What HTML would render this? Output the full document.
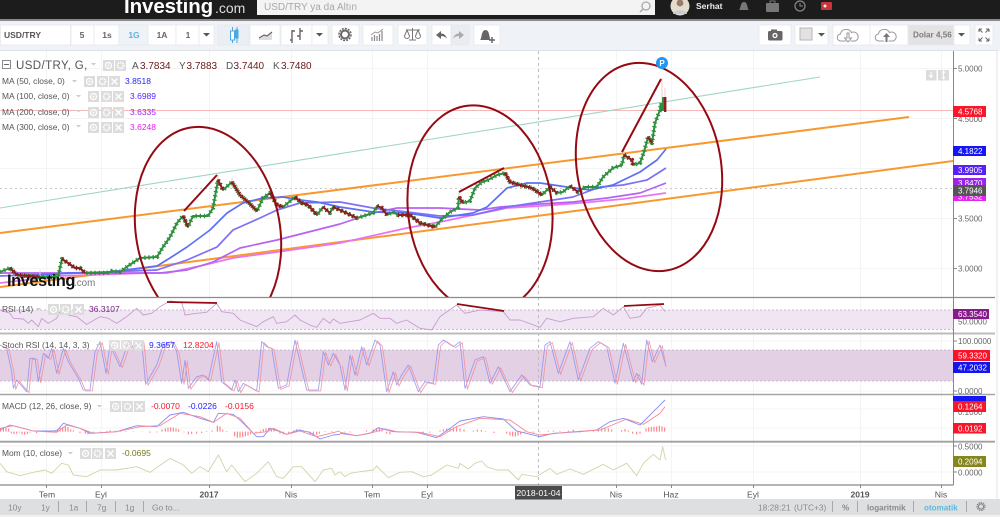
<!DOCTYPE html>
<html lang="tr"><head><meta charset="utf-8"><title>USD/TRY</title>
<style>
html,body{margin:0;padding:0;background:#fff;width:1000px;height:517px;overflow:hidden}
svg{display:block;font-family:"Liberation Sans",sans-serif;filter:blur(.35px)}
polyline{vector-effect:non-scaling-stroke;fill:none;stroke-linejoin:round}
.bar{vector-effect:non-scaling-stroke}
.lg{font-size:8.4px;fill:#555}
.val{font-size:8.5px}
.ax{font-size:8px;fill:#666}
.tag{font-size:8px;fill:#fff}
.tm{font-size:8.6px;fill:#555;text-anchor:middle}
.bt{font-size:8.4px;fill:#8a8a8a}
.bb{font-size:8.1px;fill:#8a8a8a;font-weight:bold}
.tb{font-size:8.5px;font-weight:bold;fill:#666;text-anchor:middle}
</style></head><body>
<svg width="1000" height="517" viewBox="0 0 1000 517" xmlns="http://www.w3.org/2000/svg">
<defs>
<clipPath id="main"><rect x="0" y="51" width="953" height="246"/></clipPath>
<g id="eye"><rect width="11" height="11" fill="#dcdcdc"/><circle cx="5.5" cy="5.5" r="3" fill="none" stroke="#fff" stroke-width="1.2"/><circle cx="5.5" cy="5.5" r="1" fill="#fff"/></g>
<g id="gr"><rect width="11" height="11" fill="#dcdcdc"/><circle cx="5.5" cy="5.5" r="3" fill="none" stroke="#fff" stroke-width="1.8" stroke-dasharray="1.4 .8"/></g>
<g id="xx"><rect width="11" height="11" fill="#dcdcdc"/><path d="M2.5 2.5l6 6M8.5 2.5l-6 6" stroke="#fff" stroke-width="1.4"/></g>
<path id="car" d="M0 0h5l-2.500 2.500z" fill="#ccc"/>
<path id="cd" d="M0 0h7l-3.500 3.500z" fill="#555"/>
<polyline id="price" points="0,272 10,268 17,275 40,277 58,277 62,259 68,263 75,268 80,268 85,273 107,273 112,271 120,272 128,266 140,258 157,257 163,247 170,237 177,223 183,216 188,227 193,216 208,216 213,208 218,180 223,190 232,182 240,195 248,202 257,211 263,198 270,193 277,205 283,207 295,197 302,203 308,205 317,215 323,207 330,213 333,207 340,210 357,218 373,213 377,206 382,208 387,215 393,212 398,215 410,215 420,223 435,227 442,219 450,212 458,208 459,197 463,203 470,201 475,188 482,182 488,180 497,175 505,173 510,182 520,185 532,188 542,195 550,187 557,193 563,192 570,186 578,192 585,187 597,187 603,177 613,168 622,165 624,155 632,160 633,165 640,163 644,152 648,137 652,143 655,123 660,110 661,103"/>
<path id="down" fill="none" d="M10 268L17 275 40 277M62 259L68 263 75 268 80 268 85 273M183 216L188 227M218 180L223 190M232 182L240 195 248 202 257 211M270 193L277 205 283 207M295 197L302 203 308 205 317 215M323 207L330 213M333 207L340 210 357 218M377 206L382 208 387 215M398 215L410 215 420 223 435 227M459 197L463 203M505 173L510 182 520 185 532 188 542 195M550 187L557 193M570 186L578 192M624 155L632 160 633 165M648 137L652 143"/>
</defs>

<!-- page backgrounds -->
<rect width="1000" height="517" fill="#fff"/>
<rect y="20" width="1000" height="31" fill="#eff2f6"/>
<rect width="1000" height="20" fill="#1c1c1c"/>
<rect y="19" width="1000" height="2" fill="#8a8a8a"/>

<!-- header -->
<text x="124" y="13" font-size="20.5" font-weight="bold" fill="#fff" letter-spacing="-.1">Investing</text>
<text x="215" y="13" font-size="14" fill="#ddd">.com</text>
<rect x="257" y="0" width="398" height="15" fill="#f3f3f3"/>
<text x="264" y="10" font-size="10" fill="#a8a8a8">USD/TRY ya da Altın</text>
<circle cx="646" cy="6" r="4" fill="none" stroke="#aaa" stroke-width="1.3"/><path d="M643 9l-3 3" stroke="#aaa" stroke-width="1.5"/>
<circle cx="680" cy="6" r="9.5" fill="#e4dccd"/><circle cx="680" cy="3" r="3.4" fill="#9a7b66"/><path d="M673 14c1-5 13-5 14 0z" fill="#c4cdd6"/>
<text x="696" y="9" font-size="8.5" font-weight="bold" fill="#eee">Serhat</text>
<path d="M739 10c2-1 1-8 5-8s3 7 5 8z" fill="#777"/>
<rect x="766" y="3" width="13" height="9" rx="1" fill="#777"/><rect x="770" y="1" width="5" height="3" fill="none" stroke="#777"/>
<circle cx="800" cy="6" r="5" fill="none" stroke="#888" stroke-width="1.2"/><path d="M800 3v3h3" stroke="#888" fill="none"/>
<rect x="821" y="2" width="11" height="8" rx="1" fill="#c8333d"/><circle cx="825" cy="6" r="1.5" fill="#eee"/>

<!-- toolbar buttons -->
<g fill="#fff" stroke="#e6e9ee" stroke-width=".8">
<rect x=".5" y="25" width="70" height="20"/><rect x="71" y="25" width="23" height="20"/><rect x="94" y="25" width="25" height="20"/>
<rect x="119" y="25" width="29" height="20" fill="#eef3f8"/><rect x="148" y="25" width="28" height="20"/><rect x="176" y="25" width="23" height="20"/><rect x="199" y="25" width="15" height="20"/>
<rect x="218" y="25" width="31" height="20" fill="#eaeff5"/><rect x="250" y="25" width="30" height="20"/><rect x="281" y="25" width="31" height="20"/><rect x="312" y="25" width="16" height="20"/>
<rect x="332" y="25" width="27" height="20"/><rect x="363" y="25" width="30" height="20"/><rect x="398" y="25" width="29" height="20"/>
<rect x="432" y="25" width="19" height="20"/><rect x="451" y="25" width="18" height="20" fill="#e9ecf0"/><rect x="474" y="25" width="26" height="20"/>
<rect x="759" y="25" width="32" height="20"/><rect x="795" y="25" width="33" height="20"/><rect x="833" y="25" width="37" height="20"/><rect x="870" y="25" width="38" height="20"/>
<rect x="908" y="25" width="46" height="20" fill="#e3e3e3"/><rect x="954" y="25" width="16" height="20"/><rect x="975" y="25" width="18" height="20"/>
</g>
<text x="4" y="38" font-size="8.5" font-weight="bold" fill="#555">USD/TRY</text>
<text x="82" y="38" class="tb">5</text><text x="107" y="38" class="tb">1s</text>
<text x="134" y="38" class="tb" style="fill:#5cb3e2">1G</text>
<text x="162" y="38" class="tb">1A</text><text x="188" y="38" class="tb">1</text>
<use href="#cd" x="203" y="33"/><use href="#cd" x="316" y="33"/><use href="#cd" x="818" y="33"/><use href="#cd" x="958" y="33"/>
<path d="M232.500 27v16M237 27v16" stroke="#4aa8e0"/>
<rect x="230.500" y="31" width="4" height="9" fill="#fff" stroke="#4aa8e0"/><rect x="235" y="29.500" width="3.500" height="9" fill="#4aa8e0"/>
<path d="M259 38l5-3 3 1 5-4v8h-13z" fill="#ddd"/><path d="M259 38l5-3 3 1 5-4" fill="none" stroke="#666" stroke-width="1.200"/>
<path d="M292 30v13M292 40h-2M292 31h3M300 28v12M300 36h-3M300 31h3" fill="none" stroke="#666" stroke-width="1.400"/>
<circle cx="345" cy="34.500" r="4" fill="none" stroke="#666" stroke-width="2"/><circle cx="345" cy="34.500" r="6" fill="none" stroke="#666" stroke-width="1.500" stroke-dasharray="2 1.100"/>
<path d="M372 41v-4M374.500 41v-6M377 41v-5M379.500 41v-7M382 41v-10" stroke="#888" stroke-width="1.200"/><path d="M371 35l4-3 3 1 5-4" fill="none" stroke="#999"/>
<path d="M412.500 28v12M409 40h7M406 30h14" stroke="#777" fill="none"/><path d="M404.500 36l2.500-6 2.500 6a2.500 2.500 0 0 1-5 0zM415.500 36l2.500-6 2.500 6a2.500 2.500 0 0 1-5 0z" fill="none" stroke="#777"/>
<path d="M436 35l5-4v2.500c3 0 5 2 6 5-2-2-4-2.500-6-2.500v3z" fill="#666"/>
<path d="M464 35l-5-4v2.500c-3 0-5 2-6 5 2-2 4-2.500 6-2.500v3z" fill="#aaa"/>
<path d="M480 40c2-1 1-10 5.500-10s3.500 9 5.500 10z" fill="#666"/><path d="M489 40h6M492 37v6" stroke="#666" stroke-width="1.500"/>
<rect x="768" y="31" width="14.500" height="9.500" rx="1.500" fill="#666"/><rect x="771" y="29.500" width="6" height="2" fill="#666"/><circle cx="775" cy="35.500" r="2.600" fill="#fff"/><circle cx="775" cy="35.500" r="1.300" fill="#666"/>
<rect x="800" y="28" width="12" height="12" fill="#e2e2e2" stroke="#b5b5b5"/>
<path d="M846 41h-5a3.500 3.500 0 0 1-.5-7 5 5 0 0 1 5-4.500 5.500 5.500 0 0 1 6 3 4.400 4.400 0 0 1 4 8.500h-5" fill="none" stroke="#999"/><path d="M849 33v5h2.500l-3.500 4-3.500-4h2.500v-5z" fill="#fff" stroke="#999"/>
<path d="M884 41h-5a3.500 3.500 0 0 1-.5-7 5 5 0 0 1 5-4.500 5.500 5.500 0 0 1 6 3 4.400 4.400 0 0 1 4 8.500h-5" fill="none" stroke="#999"/><path d="M887.500 42v-5h2.500l-3.500-4-3.500 4h2.500v5z" fill="#777"/>
<text x="913" y="37.500" font-size="8.100" font-weight="bold" fill="#7d7d7d">Dolar 4,56</text>
<path d="M979 29h3M979 29v3M979 29l3.500 3.500M989 29h-3M989 29v3M989 29l-3.500 3.500M979 41h3M979 41v-3M979 41l3.500-3.500M989 41h-3M989 41v-3M989 41l-3.500-3.500" stroke="#666" fill="none"/>

<!-- chart frame -->
<rect x="0" y="50.500" width="997" height="449" fill="#fff"/>
<path d="M0 50.500H997" stroke="#dfe2e6"/>
<path d="M997 50v449" stroke="#e3e3e3"/>

<!-- grids -->
<path d="M0 68.500H953M0 118.500H953M0 168.500H953M0 218.500H953M0 268.500H953M0 341H953M0 391H953M0 409H953M0 428H953M0 446H953M0 472H953M46.500 51V485M101.500 51V485M209.500 51V485M291.500 51V485M372.500 51V485M427.500 51V485M616.500 51V485M671.500 51V485M753.500 51V485M860.500 51V485M941.500 51V485" stroke="#f4f4f4" stroke-width="1" fill="none"/>

<!-- indicator bands -->
<rect x="0" y="310" width="953" height="19.500" fill="#f0e5f3"/>
<path d="M0 310H953M0 329.500H953" stroke="#bda9bf" stroke-dasharray="2 2" stroke-width=".8"/>
<rect x="0" y="350" width="953" height="31" fill="#e3d0e5"/>
<path d="M0 350H953M0 381H953" stroke="#bda9bf" stroke-dasharray="2 2" stroke-width=".8"/>

<!-- hlines -->
<path d="M0 110.500H953" stroke="#f9b8b8"/>
<path d="M0 188.500H953" stroke="#c8c8c8" stroke-dasharray="2 3"/>
<path d="M538.500 51V485" stroke="#bbb" stroke-dasharray="3 3"/>

<!-- main pane -->
<g clip-path="url(#main)" fill="none">
<path d="M0 208L820 77" stroke="#9ed5c8" stroke-width="1.100"/>
<path d="M0 233L909 117" stroke="#f8982e" stroke-width="2"/>
<path d="M0 287L953 161" stroke="#f8982e" stroke-width="2"/>
<polyline stroke="#e874f4" stroke-width="1.700" points="0,283 60,276 147,273 167,273 200,266 233,258 277,252 340,243 407,228 440,222 473,215 507,208 540,206 580,203 623,199 666,193"/>
<polyline stroke="#b662f2" stroke-width="1.700" points="0,273 160,273 187,270 213,262 240,248 277,240 340,224 373,213 397,208 440,208 480,210 500,207 540,204 573,202 607,198 640,193 666,183"/>
<polyline stroke="#7f70f5" stroke-width="1.700" points="0,276 80,273 157,270 187,260 217,247 233,230 260,218 277,210 300,203 340,202 373,208 407,212 440,216 473,215 507,207 540,202 573,197 600,187 623,185 647,180 666,168"/>
<polyline stroke="#5b70f7" stroke-width="1.700" points="20,277 67,273 110,272 157,266 170,258 187,247 210,230 227,213 243,203 263,198 283,197 300,200 317,202 340,207 373,212 407,213 440,218 473,213 487,207 507,188 527,183 540,183 567,187 590,190 613,185 640,172 657,160 666,149"/>
<path d="M662 78v32M665 88v12M218 175v8M270 188v6M459 192v8M624 150v6M232 178v5M120 268v4M40 270v6M505 170v5" stroke="#f1cdcd"/>
<use href="#price" stroke="#2f8f3e" stroke-width="2"/>
<use href="#price" stroke="#2f8f3e" stroke-width="4.400" stroke-dasharray="1.300 2.900"/>
<use href="#down" stroke="#8b1f1f" stroke-width="2"/>
<use href="#down" stroke="#8b1f1f" stroke-width="4.400" stroke-dasharray="1.300 2.900"/>
<rect x="659.500" y="103" width="2.500" height="8" fill="#2f8f3e"/><rect x="662" y="97" width="2" height="14" fill="#2f8f3e"/><rect x="664" y="97" width="2.400" height="15" fill="#8b1f1f"/>
<g stroke="#950a12" stroke-width="2">
<ellipse cx="208" cy="231" rx="72" ry="105" transform="rotate(-10 208 231)"/>
<ellipse cx="480" cy="209" rx="72" ry="104" transform="rotate(-7 480 209)"/>
<ellipse cx="649" cy="167" rx="72" ry="105" transform="rotate(-10 649 167)"/>
<path d="M184 211L217 175M459 192L504 168M622 152L661 79"/>
</g>
</g>
<circle cx="662" cy="63" r="6" fill="#2196f3"/><text x="662" y="66" font-size="8" font-weight="bold" fill="#fff" text-anchor="middle">P</text>
<rect x="926" y="70" width="10.500" height="10.500" fill="#dcdcdc"/><path d="M931 72v5M929 75l2 2.500 2-2.500" stroke="#fff" fill="none"/>
<rect x="938" y="70" width="11" height="10.500" fill="#dcdcdc"/><path d="M943.500 71.500v7.500M942 73l1.500-2 1.500 2M942 77l1.500 2 1.500-2" stroke="#fff" fill="none"/>

<!-- watermark -->
<text x="7" y="286" font-size="16.500" font-weight="bold" fill="#111" letter-spacing="-.5">Investing</text>
<text x="74" y="286" font-size="9.800" fill="#777">.com</text>

<!-- RSI -->
<g transform="translate(0,295) scale(.33333)">
<polyline stroke="#c99dcc" stroke-width=".9" points="0,45 30,55 40,70 70,72 85,85 95,75 115,95 125,70 145,85 170,70 180,50 205,60 230,65 260,88 300,65 325,70 350,85 380,65 410,40 430,60 455,55 480,35 510,18 545,22 555,60 590,55 620,52 650,25 665,50 700,55 720,75 770,95 790,80 820,65 830,85 860,80 885,60 900,75 930,90 950,97 970,70 990,85 1000,72 1020,85"/>
</g>
<g transform="translate(340,295) scale(.33333)">
<polyline stroke="#c99dcc" stroke-width=".9" points="0,85 30,80 60,75 100,55 120,70 150,70 170,85 200,75 240,100 275,105 300,65 350,30 375,55 420,45 490,50 510,75 540,75 600,97 620,70 660,80 700,70 760,65 790,40 820,60 850,35 870,70 900,65 920,40 960,30 975,50"/>
</g>
<path d="M167 302L217 303M457 304L504 311M624 306L664 304" stroke="#950a12" stroke-width="1.700" fill="none"/>

<!-- Stoch -->
<g transform="translate(0,295) scale(.33333)" stroke-width=".85" opacity=".85">
<polyline stroke="#8a8cf5" points="0,150 20,160 35,230 40,280 50,255 80,290 90,190 105,190 115,260 130,175 145,190 155,160 170,235 190,160 205,200 235,250 250,285 270,285 285,170 300,140 318,235 330,150 360,215 385,140 395,160 410,150 425,140 437,268 470,210 490,150 515,140 530,170 545,265 555,195 565,280 590,245 610,240 625,255 650,140 665,260 695,285 705,255 715,290 730,265 770,288 785,140 800,155 815,160 835,280 860,270 885,135 900,200 920,285 955,285 970,170 985,210 1000,175 1020,210"/>
<polyline stroke="#f48a96" transform="translate(7,3)" points="0,150 20,160 35,230 40,280 50,255 80,290 90,190 105,190 115,260 130,175 145,190 155,160 170,235 190,160 205,200 235,250 250,285 270,285 285,170 300,140 318,235 330,150 360,215 385,140 395,160 410,150 425,140 437,268 470,210 490,150 515,140 530,170 545,265 555,195 565,280 590,245 610,240 625,255 650,140 665,260 695,285 705,255 715,290 730,265 770,288 785,140 800,155 815,160 835,280 860,270 885,135 900,200 920,285 955,285 970,170 985,210 1000,175 1013,205"/>
</g>
<g transform="translate(340,295) scale(.33333)" stroke-width=".85" opacity=".85">
<polyline stroke="#8a8cf5" points="0,210 15,285 30,180 45,240 65,155 80,210 105,135 120,150 140,290 160,230 170,270 185,240 205,210 235,290 255,260 280,265 295,150 310,135 340,155 360,140 375,280 405,195 430,185 450,265 475,215 510,290 545,240 570,270 600,275 615,150 630,140 655,235 690,140 715,255 750,160 775,140 800,155 825,265 850,145 880,260 890,235 905,268 920,135 937,200 960,150 978,215"/>
<polyline stroke="#f48a96" transform="translate(7,3)" points="0,210 15,285 30,180 45,240 65,155 80,210 105,135 120,150 140,290 160,230 170,270 185,240 205,210 235,290 255,260 280,265 295,150 310,135 340,155 360,140 375,280 405,195 430,185 450,265 475,215 510,290 545,240 570,270 600,275 615,150 630,140 655,235 690,140 715,255 750,160 775,140 800,155 825,265 850,145 880,260 890,235 905,268 920,135 937,200 960,150 971,212"/>
</g>

<!-- MACD -->
<g transform="translate(0,395) scale(.33333)">
<path class="bar" stroke="#fb7d85" stroke-width="1.100" fill="none" d="M2 110V100M10 110V98M18 110V99M26 110V101M34 110V115M42 110V117M50 110V116M58 110V113M66 110V118M74 110V119M82 110V117M90 110V113M110 110V114M130 110V108M150 110V112M165 110V105M172 110V102M180 110V98M188 110V96M196 110V94M204 110V96M212 110V103M220 110V106M240 110V114M256 110V116M264 110V118M280 110V114M300 110V112M320 110V108M330 110V106M345 110V107M362 110V106M378 110V108M400 110V111M425 110V109M450 110V113M470 110V112M486 110V103M496 110V100M504 110V98M512 110V97M520 110V98M528 110V100M536 110V103M552 110V112M565 110V118M575 110V117M590 110V116M605 110V114M620 110V108M636 110V106M652 110V92M660 110V94M668 110V104M680 110V108M704 110V124M712 110V128M720 110V128M728 110V126M736 110V124M744 110V122M752 110V118M768 110V114M782 110V106M790 110V102M798 110V100M806 110V99M814 110V100M822 110V103M840 110V116M850 110V118M866 110V114M882 110V106M890 110V103M900 110V103M910 110V106M930 110V118M940 110V122M950 110V120M958 110V116M975 110V108M995 110V108M1015 110V108"/>
<polyline stroke="#8a8cf5" stroke-width=".9" points="0,105 30,90 70,100 100,108 170,108 190,85 240,100 270,115 350,110 410,92 470,95 510,60 550,52 600,70 640,82 655,55 700,58 725,80 770,125 790,125 810,100 840,110 860,118 895,105 930,112 960,132 1000,120 1020,118"/>
<polyline stroke="#f48a96" stroke-width=".9" points="0,100 40,92 100,108 170,112 200,90 240,100 280,115 350,110 420,95 480,92 540,55 600,65 640,82 680,55 720,70 760,115 800,110 820,100 860,118 900,108 950,125 1020,108"/>
</g>
<g transform="translate(340,395) scale(.33333)">
<path class="bar" stroke="#fb7d85" stroke-width="1.100" fill="none" d="M2 110V110M15 110V112M30 110V112M80 110V106M100 110V103M110 110V100M118 110V98M126 110V103M140 110V116M150 110V118M175 110V112M215 110V113M250 110V114M270 110V113M300 110V106M310 110V103M320 110V101M330 110V99M340 110V98M350 110V97M360 110V100M372 110V103M400 110V107M412 110V104M424 110V105M436 110V108M462 110V114M500 110V116M510 110V122M518 110V124M526 110V125M534 110V122M542 110V118M552 110V113M580 110V113M600 110V112M625 110V107M640 110V107M660 110V108M685 110V107M700 110V104M720 110V112M740 110V108M760 110V107M775 110V104M785 110V100M795 110V99M805 110V100M815 110V104M845 110V105M855 110V102M865 110V106M878 110V116M890 110V118M900 110V116M910 110V110M918 110V100M926 110V97M934 110V96M942 110V95M950 110V94M958 110V92M966 110V94M974 110V97"/>
<polyline stroke="#8a8cf5" stroke-width=".9" points="0,115 50,122 90,115 115,98 160,110 230,112 290,128 330,100 360,78 430,65 490,72 530,108 600,125 640,115 720,110 770,105 810,80 850,70 900,90 950,40 975,15"/>
<polyline stroke="#f48a96" stroke-width=".9" points="0,112 50,122 100,112 135,102 170,110 240,112 300,125 350,95 420,70 510,75 560,110 600,120 700,110 780,105 860,72 910,88 960,55 975,35"/>
</g>

<!-- Mom -->
<g transform="translate(0,395) scale(.33333)">
<polyline stroke="#d3d3a8" stroke-width=".9" points="0,205 20,230 60,242 100,232 135,225 155,235 185,205 205,210 220,240 260,245 300,225 350,225 410,215 450,232 510,190 550,210 575,235 600,215 625,230 655,180 680,230 695,210 735,260 770,235 805,200 830,245 850,250 880,215 905,215 945,260 970,225 995,220 1005,240 1020,230"/>
</g>
<g transform="translate(340,395) scale(.33333)">
<polyline stroke="#d3d3a8" stroke-width=".9" points="0,230 15,245 30,235 60,230 100,225 110,213 145,248 180,232 215,230 250,245 275,240 320,210 355,220 360,205 385,222 405,205 425,198 440,215 470,225 505,225 535,255 545,238 590,245 630,220 650,238 690,222 730,238 790,208 820,225 860,205 890,242 910,205 940,178 960,195 968,155 977,195"/>
</g>

<!-- separators -->
<path d="M0 297.500H995" stroke="#8c8c8c" stroke-width="1.200"/>
<path d="M0 333.500H995" stroke="#bdbdbd" stroke-width="2"/>
<path d="M0 394.500H995" stroke="#a5a5a5" stroke-width="1.400"/>
<path d="M0 441.700H995" stroke="#a0a0a0" stroke-width="1.800"/>
<path d="M0 485H953.500" stroke="#888" stroke-width="1.200"/>
<path d="M953.500 51V485" stroke="#888"/>

<!-- axis ticks -->
<path d="M953 68.500h4M953 118.500h4M953 218.500h4M953 268.500h4M953 341h4M953 391h4M953 446h4M953 472h4M46.500 485v3M101.500 485v3M209.500 485v3M291.500 485v3M372.500 485v3M427.500 485v3M616.500 485v3M671.500 485v3M753.500 485v3M860.500 485v3M941.500 485v3" stroke="#888" fill="none"/>

<!-- axis labels -->
<text x="958" y="71.500" class="ax">5.0000</text>
<text x="958" y="122" class="ax">4.5000</text>
<text x="958" y="221.500" class="ax">3.5000</text>
<text x="958" y="271.500" class="ax">3.0000</text>
<text x="958" y="324.500" class="ax">50.0000</text>
<text x="958" y="344" class="ax">100.0000</text>
<text x="958" y="394" class="ax">0.0000</text>
<text x="958" y="415" class="ax">0.1000</text>
<text x="958" y="449.500" class="ax">0.5000</text>
<text x="958" y="475.500" class="ax">0.0000</text>

<!-- price tags -->
<rect x="953" y="106" width="33" height="11" fill="#f9162a"/><text x="958" y="114.500" class="tag">4.5768</text>
<rect x="953" y="146" width="33" height="10" fill="#1515f5"/><text x="958" y="154" class="tag">4.1822</text>
<rect x="953" y="165" width="33" height="10" fill="#5522f5"/><text x="958" y="173" class="tag">3.9905</text>
<rect x="953" y="178" width="33" height="9" fill="#9a22ea"/><text x="958" y="186" class="tag">3.8470</text>
<rect x="953" y="191" width="33" height="10" fill="#e222ee"/><text x="958" y="199.500" class="tag">3.7532</text>
<rect x="953" y="185" width="33" height="11" fill="#555"/><text x="958" y="193.500" class="tag">3.7946</text>
<rect x="953" y="309" width="36" height="10" fill="#861a8a"/><text x="958" y="317" class="tag">63.3540</text>
<rect x="953" y="350" width="37" height="11" fill="#fa1228"/><text x="958" y="358.500" class="tag">59.3320</text>
<rect x="953" y="362" width="37" height="11" fill="#1414ee"/><text x="958" y="370.500" class="tag">47.2032</text>
<rect x="953" y="396" width="33" height="5" fill="#1515f5"/>
<rect x="953" y="401" width="33" height="11" fill="#f9162a"/><text x="958" y="409.500" class="tag">0.1264</text>
<rect x="953" y="423" width="33" height="10.500" fill="#f9162a"/><text x="958" y="431.500" class="tag">0.0192</text>
<rect x="953" y="456" width="33" height="11" fill="#86861e"/><text x="958" y="464.500" class="tag">0.2094</text>

<!-- legends -->
<rect x="2.500" y="60.500" width="8" height="8" fill="#fff" stroke="#888"/><path d="M4 64.500h5" stroke="#666"/>
<text x="16" y="69" font-size="11.500" fill="#555" letter-spacing=".4">USD/TRY, G,</text>
<use href="#car" x="91" y="63"/><use href="#eye" x="103" y="60"/><use href="#gr" x="115" y="60"/>
<g font-size="10" fill="#6b1a1a">
<text x="132" y="69" fill="#555">A</text><text x="140" y="69">3.7834</text>
<text x="179" y="69" fill="#555">Y</text><text x="186.500" y="69">3.7883</text>
<text x="226" y="69" fill="#555">D</text><text x="233.500" y="69">3.7440</text>
<text x="273" y="69" fill="#555">K</text><text x="281" y="69">3.7480</text>
</g>
<text x="2" y="84" class="lg">MA (50, close, 0)</text><use href="#car" x="72" y="80"/><use href="#eye" x="84" y="76"/><use href="#gr" x="97" y="76"/><use href="#xx" x="109" y="76"/><text x="125" y="84" class="val" fill="#2222ff">3.8518</text>
<text x="2" y="99" class="lg">MA (100, close, 0)</text><use href="#car" x="76" y="95"/><use href="#eye" x="88" y="91"/><use href="#gr" x="101" y="91"/><use href="#xx" x="113" y="91"/><text x="130" y="99" class="val" fill="#5522ff">3.6989</text>
<text x="2" y="115" class="lg">MA (200, close, 0)</text><use href="#car" x="76" y="110"/><use href="#eye" x="88" y="107"/><use href="#gr" x="101" y="107"/><use href="#xx" x="113" y="107"/><text x="130" y="115" class="val" fill="#9922ff">3.6335</text>
<text x="2" y="130" class="lg">MA (300, close, 0)</text><use href="#car" x="76" y="125"/><use href="#eye" x="88" y="122"/><use href="#gr" x="101" y="122"/><use href="#xx" x="113" y="122"/><text x="130" y="130" class="val" fill="#e020f0">3.6248</text>

<text x="2" y="312" class="lg">RSI (14)</text><use href="#car" x="36" y="308"/><use href="#eye" x="48" y="304"/><use href="#gr" x="60" y="304"/><use href="#xx" x="73" y="304"/><text x="89" y="312" class="val" fill="#7a1f86">36.3107</text>
<text x="2" y="348" class="lg">Stoch RSI (14, 14, 3, 3)</text><use href="#car" x="96" y="344"/><use href="#eye" x="109" y="340" opacity=".8"/><use href="#gr" x="121" y="340" opacity=".8"/><use href="#xx" x="133" y="340" opacity=".8"/><text x="149" y="348" class="val" fill="#2222ff">9.3657</text><text x="183" y="348" class="val" fill="#f5162a">12.8204</text>
<text x="2" y="409" class="lg">MACD (12, 26, close, 9)</text><use href="#car" x="97" y="405"/><use href="#eye" x="110" y="401"/><use href="#gr" x="122" y="401"/><use href="#xx" x="134" y="401"/><text x="151" y="409" class="val" fill="#f5162a">-0.0070</text><text x="188" y="409" class="val" fill="#2222ff">-0.0226</text><text x="225" y="409" class="val" fill="#f5162a">-0.0156</text>
<text x="2" y="456" class="lg">Mom (10, close)</text><use href="#car" x="68" y="452"/><use href="#eye" x="80" y="448"/><use href="#gr" x="92" y="448"/><use href="#xx" x="105" y="448"/><text x="122" y="456" class="val" fill="#77771a">-0.0695</text>

<!-- time axis -->
<text x="47" y="497.500" class="tm">Tem</text><text x="101" y="497.500" class="tm">Eyl</text><text x="209" y="497.500" class="tm" font-weight="bold">2017</text><text x="291" y="497.500" class="tm">Nis</text><text x="372" y="497.500" class="tm">Tem</text><text x="427" y="497.500" class="tm">Eyl</text><text x="616" y="497.500" class="tm">Nis</text><text x="671" y="497.500" class="tm">Haz</text><text x="753" y="497.500" class="tm">Eyl</text><text x="860" y="497.500" class="tm" font-weight="bold">2019</text><text x="941" y="497.500" class="tm">Nis</text>

<!-- bottom bar -->
<rect y="499" width="1000" height="16" fill="#dedfe1"/><rect y="515" width="1000" height="2" fill="#f1f1f1"/>
<rect x="515" y="486" width="47" height="13.500" fill="#4a4a4a"/><text x="538.500" y="496" font-size="8.600" fill="#fff" text-anchor="middle">2018-01-04</text>
<text x="8" y="510.500" class="bt">10y</text><text x="41" y="510.500" class="bt">1y</text><text x="69" y="510.500" class="bt">1a</text><text x="97" y="510.500" class="bt">7g</text><text x="125" y="510.500" class="bt">1g</text><text x="152" y="510.500" class="bt">Go to...</text>
<path d="M58.500 501v11M86.500 501v11M115.500 501v11M143.500 501v11M832.500 501v11M857.500 501v11M913.500 501v11M966.500 501v11" stroke="#a8a8a8"/>
<text x="758" y="510.500" class="bt">18:28:21</text><text x="794" y="510.500" class="bt">(UTC+3)</text><text x="842" y="510.500" class="bb">%</text><text x="867" y="510.500" class="bb">logaritmik</text><text x="924" y="510.500" class="bb" style="fill:#5cb9e0">otomatik</text>
<circle cx="981" cy="506.500" r="2.600" fill="none" stroke="#888" stroke-width="1.300"/><circle cx="981" cy="506.500" r="4" fill="none" stroke="#888" stroke-width="1.200" stroke-dasharray="1.400 .9"/>
</svg>
</body></html>
